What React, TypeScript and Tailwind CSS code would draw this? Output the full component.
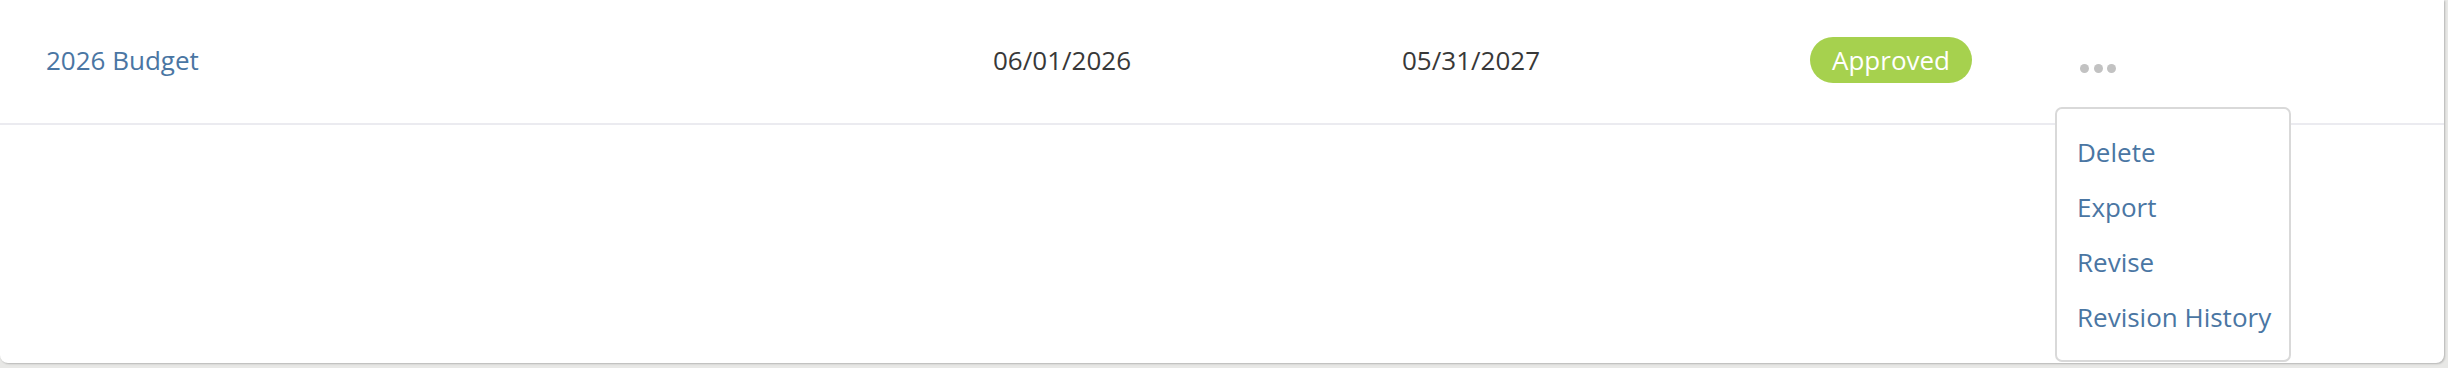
import React from 'react'

const menuItems = ['Delete', 'Export', 'Revise', 'Revision History']

export default function App() {
  return (
    <div
      className="w-[2448px] h-[368px] bg-[#e8e8e6] overflow-hidden"
      style={{ fontFamily: '"Open Sans", "Noto Sans", sans-serif' }}
    >
      <div className="relative w-[2444px] h-[363px] bg-white rounded-b-[8px] shadow-[1px_1px_2px_rgba(0,0,0,0.22)]">
        {/* table row */}
        <div className="flex items-center h-[125px] pb-[3px] border-b-2 border-[#ebebf0] text-[26px]">
          <div className="w-[993px] pl-[46px] shrink-0">
            <a href="#" className="text-[#4a76a3]">2026 Budget</a>
          </div>
          <div className="w-[409px] shrink-0 text-[#383838]">06/01/2026</div>
          <div className="w-[408px] shrink-0 text-[#383838]">05/31/2027</div>
          <div className="w-[270px] shrink-0">
            <span className="inline-flex items-center h-[46px] px-[22px] rounded-full bg-[#a6d14e] text-white">
              Approved
            </span>
          </div>
          <div className="flex gap-[4.5px] mt-[17px]">
            <span className="w-[9px] h-[9px] rounded-full bg-[#c2c2c2]" />
            <span className="w-[9px] h-[9px] rounded-full bg-[#c2c2c2]" />
            <span className="w-[9px] h-[9px] rounded-full bg-[#c2c2c2]" />
          </div>
        </div>

        {/* actions dropdown */}
        <div className="absolute left-[2055px] top-[107px] w-[236px] h-[255px] bg-white border-2 border-[#d9d9d9] rounded-[7px] pt-[16px] pb-[14px] pl-[20px]">
          {menuItems.map((item) => (
            <div key={item} className="h-[55px] flex items-center text-[26px] text-[#4a76a3]">
              {item}
            </div>
          ))}
        </div>
      </div>
    </div>
  )
}
